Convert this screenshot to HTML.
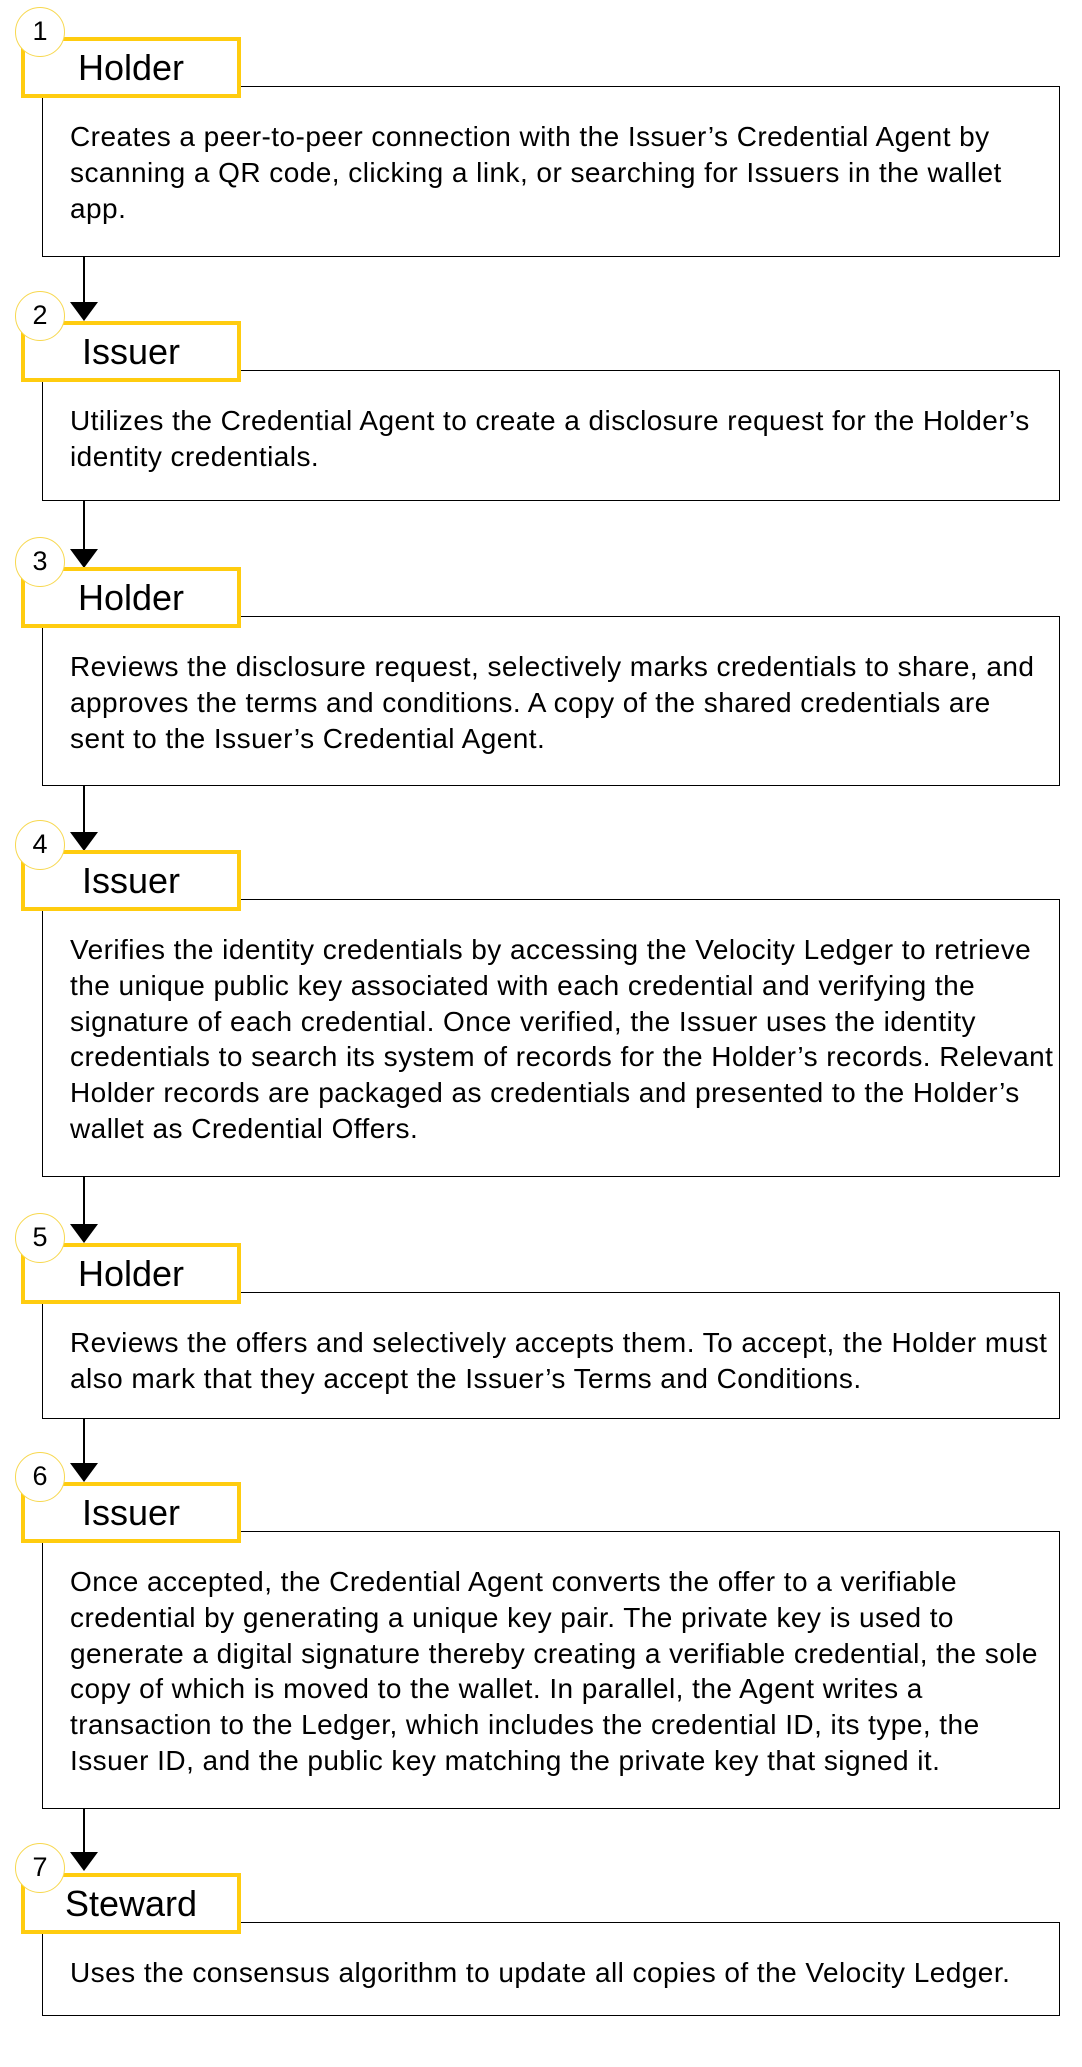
<!DOCTYPE html>
<html><head><meta charset="utf-8">
<style>
body{margin:0;width:1082px;height:2067px;background:#fff;position:relative;overflow:hidden;font-family:"Liberation Sans",sans-serif;color:#000}
.box{position:absolute;left:42px;width:1018px;border:1.5px solid #000;box-sizing:border-box;background:#fff}
.box p{margin:0;position:absolute;left:27px;top:32px;font-size:28px;letter-spacing:0.45px;line-height:35.8px;white-space:nowrap}
.lab{position:absolute;left:21px;width:220px;height:61px;border:4px solid #ffcc0f;box-sizing:border-box;background:#fff;font-size:36px;text-align:center;line-height:53px}
.c{position:absolute;left:15px;width:50px;height:50px;border:1.5px solid #f7d84f;border-radius:50%;box-sizing:border-box;background:#fff;font-size:27px;text-align:center;line-height:47px}
.ln{position:absolute;left:83px;width:2px;background:#000}
.ah{position:absolute;left:70px;width:0;height:0;border-left:14px solid transparent;border-right:14px solid transparent;border-top:19px solid #000}
</style></head><body>

<div class="box" style="top:86px;height:171px"><p>Creates a peer-to-peer connection with the Issuer’s Credential Agent by<br>scanning a QR code, clicking a link, or searching for Issuers in the wallet<br>app.</p></div>
<div class="lab" style="top:37px">Holder</div>
<div class="c" style="top:7px">1</div>

<div class="ln" style="top:257px;height:48px"></div><div class="ah" style="top:302px"></div>
<div class="box" style="top:370px;height:131px"><p>Utilizes the Credential Agent to create a disclosure request for the Holder’s<br>identity credentials.</p></div>
<div class="lab" style="top:321px">Issuer</div>
<div class="c" style="top:291px">2</div>

<div class="ln" style="top:501px;height:50px"></div><div class="ah" style="top:549px"></div>
<div class="box" style="top:616px;height:170px"><p>Reviews the disclosure request, selectively marks credentials to share, and<br>approves the terms and conditions. A copy of the shared credentials are<br>sent to the Issuer’s Credential Agent.</p></div>
<div class="lab" style="top:567px">Holder</div>
<div class="c" style="top:537px">3</div>

<div class="ln" style="top:786px;height:50px"></div><div class="ah" style="top:832px"></div>
<div class="box" style="top:899px;height:278px"><p>Verifies the identity credentials by accessing the Velocity Ledger to retrieve<br>the unique public key associated with each credential and verifying the<br>signature of each credential. Once verified, the Issuer uses the identity<br>credentials to search its system of records for the Holder’s records. Relevant<br>Holder records are packaged as credentials and presented to the Holder’s<br>wallet as Credential Offers.</p></div>
<div class="lab" style="top:850px">Issuer</div>
<div class="c" style="top:820px">4</div>

<div class="ln" style="top:1177px;height:50px"></div><div class="ah" style="top:1224px"></div>
<div class="box" style="top:1292px;height:127px"><p>Reviews the offers and selectively accepts them. To accept, the Holder must<br>also mark that they accept the Issuer’s Terms and Conditions.</p></div>
<div class="lab" style="top:1243px">Holder</div>
<div class="c" style="top:1213px">5</div>

<div class="ln" style="top:1419px;height:50px"></div><div class="ah" style="top:1463px"></div>
<div class="box" style="top:1531px;height:278px"><p>Once accepted, the Credential Agent converts the offer to a verifiable<br>credential by generating a unique key pair. The private key is used to<br>generate a digital signature thereby creating a verifiable credential, the sole<br>copy of which is moved to the wallet. In parallel, the Agent writes a<br>transaction to the Ledger, which includes the credential ID, its type, the<br>Issuer ID, and the public key matching the private key that signed it.</p></div>
<div class="lab" style="top:1482px">Issuer</div>
<div class="c" style="top:1452px">6</div>

<div class="ln" style="top:1808px;height:47px"></div><div class="ah" style="top:1852px"></div>
<div class="box" style="top:1922px;height:94px"><p>Uses the consensus algorithm to update all copies of the Velocity Ledger.</p></div>
<div class="lab" style="top:1873px">Steward</div>
<div class="c" style="top:1843px">7</div>

</body></html>
